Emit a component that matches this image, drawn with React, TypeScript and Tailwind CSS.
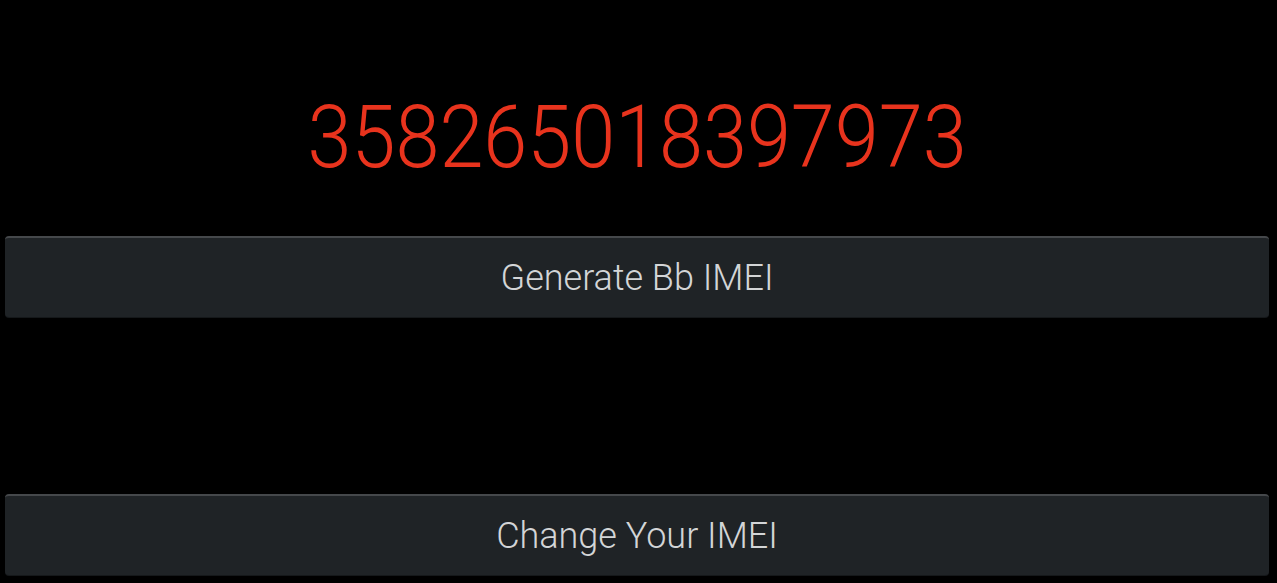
import React from "react";

const ImeiButton = ({ label }: { label: string }) => (
  <button className="flex h-[81px] w-full items-center justify-center rounded-[4px] border-t-2 border-[#45484b] bg-[#1f2326] text-[36px] font-light text-[#d3d5d7] shadow-[0_1px_0_#15181a]">
    {label}
  </button>
);

const App = () => {
  const imei = "358265018397973";

  return (
    <div
      className="flex h-[583px] w-full flex-col bg-black pl-[5px] pr-[8px]"
      style={{ fontFamily: "Roboto, 'Noto Sans', sans-serif" }}
    >
      <div className="flex h-[236px] items-start justify-center pt-[93px]">
        <span className="inline-block scale-x-[0.9] text-[88px] font-light leading-none text-[#e8331d]">
          {imei}
        </span>
      </div>
      <ImeiButton label="Generate Bb IMEI" />
      <div className="h-[177px]" />
      <ImeiButton label="Change Your IMEI" />
    </div>
  );
};

export default App;
